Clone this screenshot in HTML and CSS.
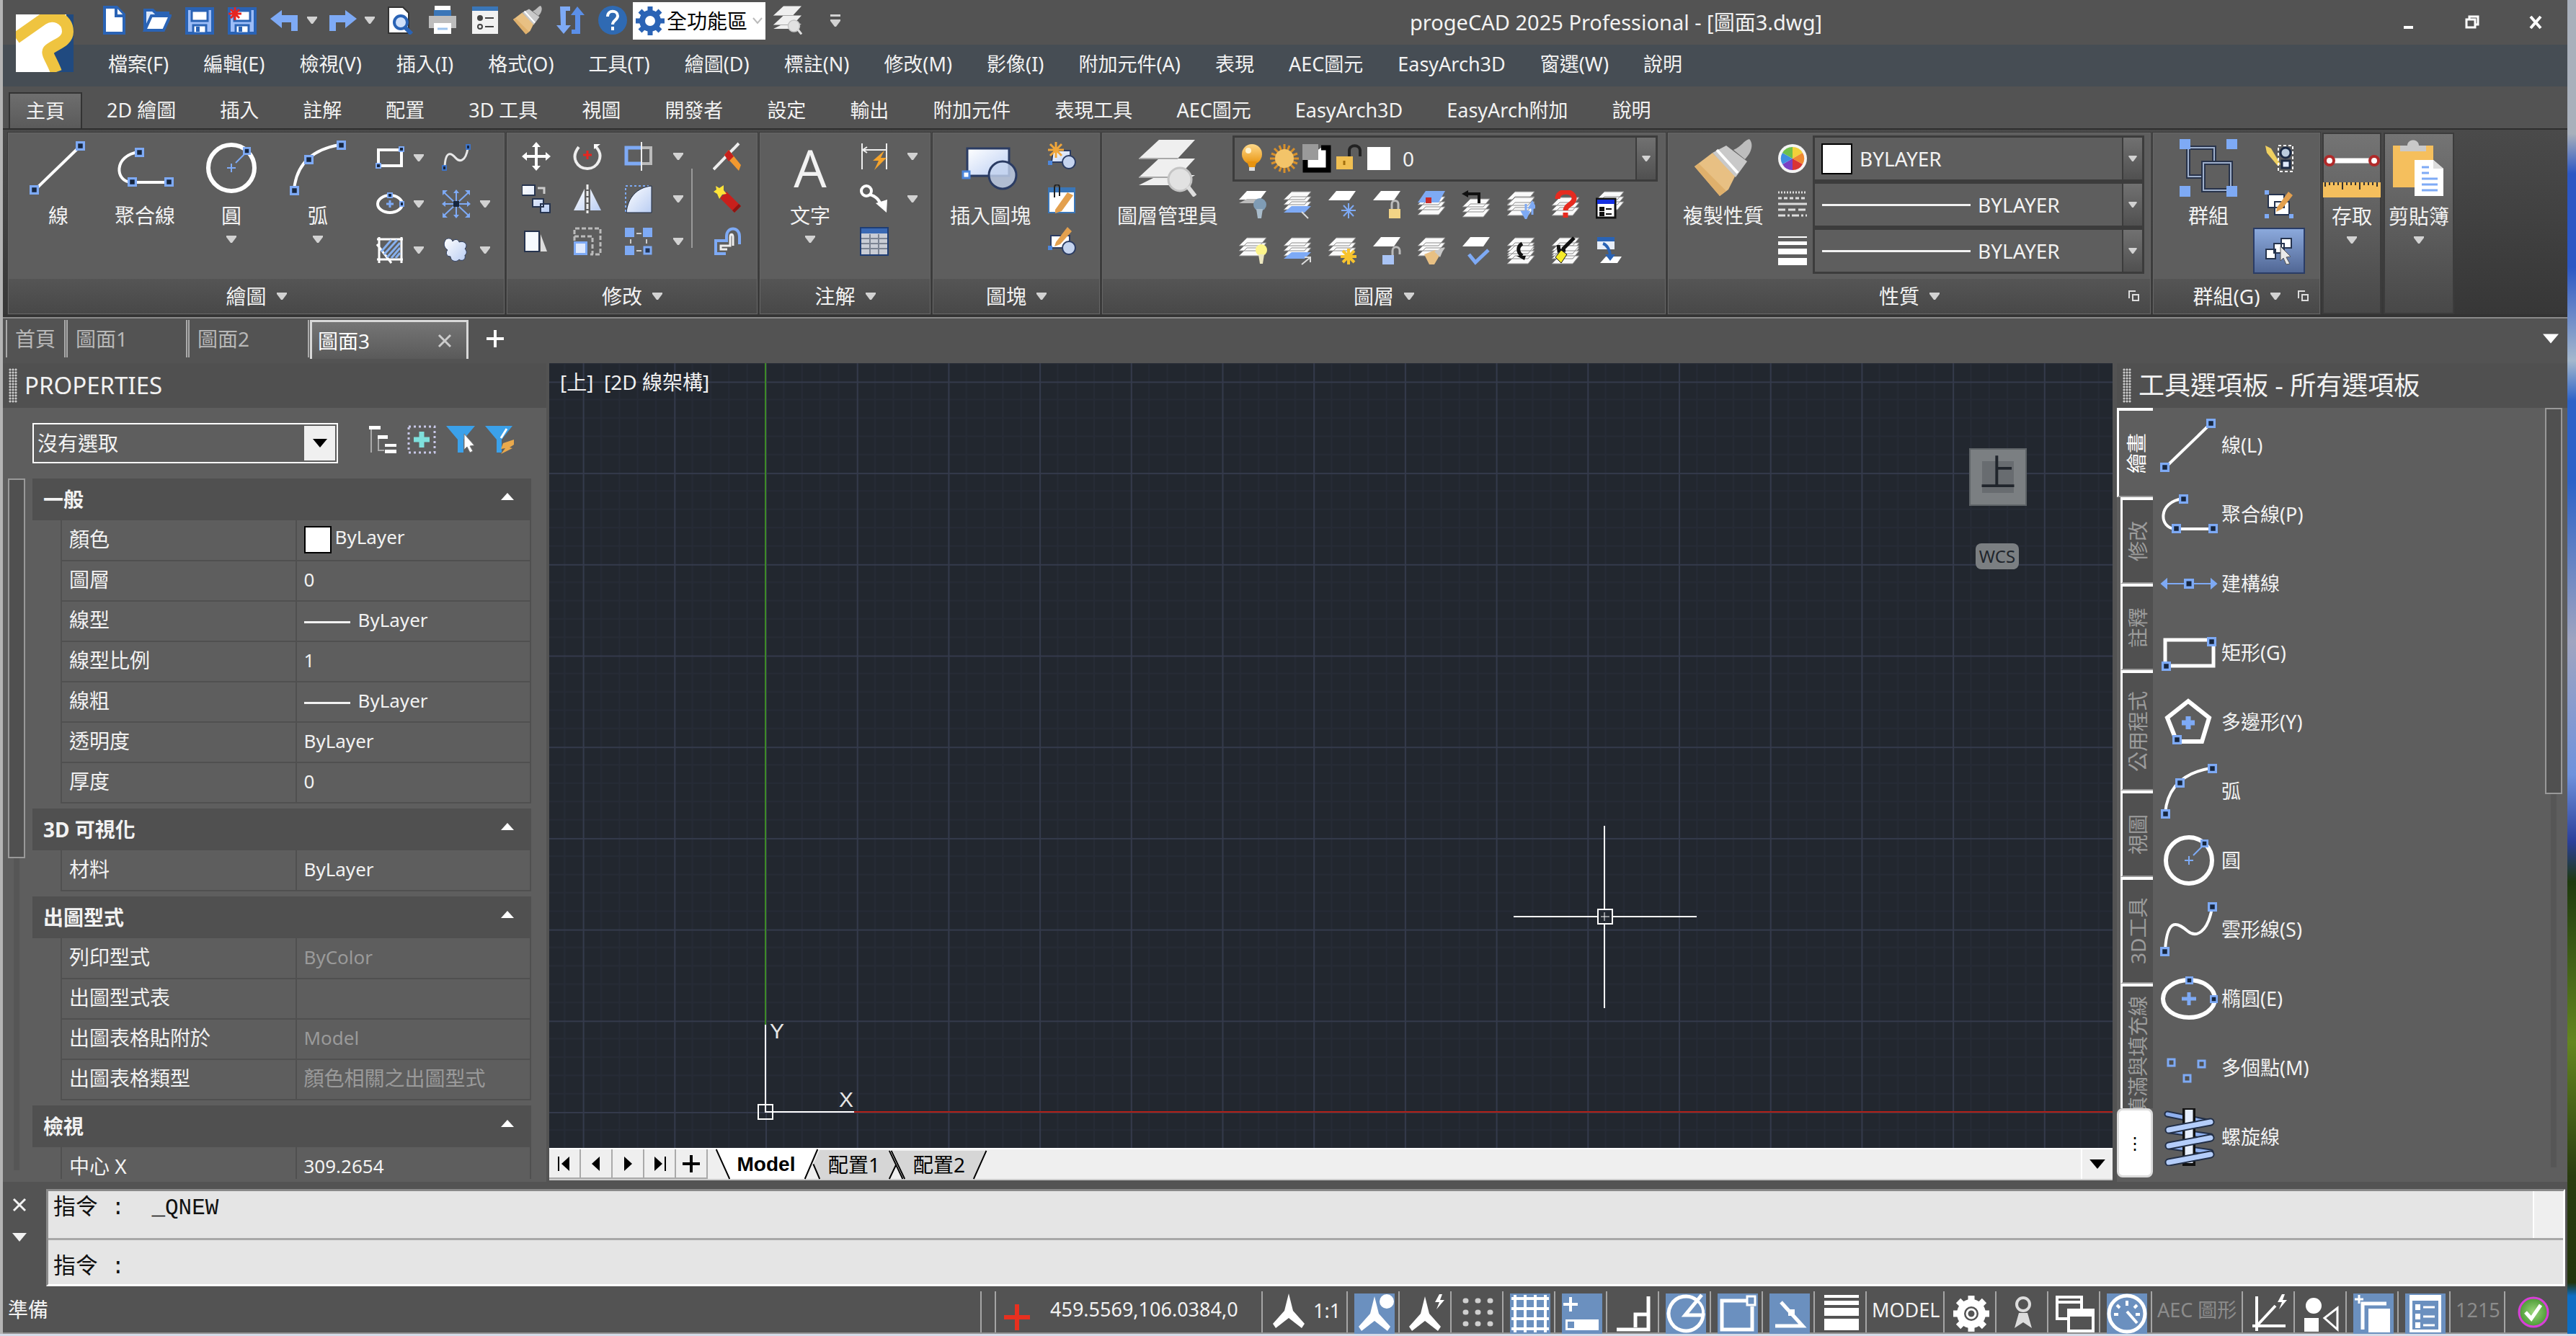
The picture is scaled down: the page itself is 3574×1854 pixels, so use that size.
FILE: index.html
```html
<!DOCTYPE html>
<html lang="zh-Hant">
<head>
    <meta charset="UTF-8">
    <meta name="viewport" content="width=device-width, initial-scale=1.0">
    <title>progeCAD 2025 Professional - [圖面3.dwg]</title>
    <link rel="stylesheet" href="styles.css">
</head>
<body>
    <!-- icon sprite -->
    <svg class="sprite" aria-hidden="true">
        <defs>
            <linearGradient id="g-blue" x1="0" y1="0" x2="1" y2="1"><stop offset="0" stop-color="#fff"/><stop offset="1" stop-color="#b9cdf3"/></linearGradient>
            <linearGradient id="g-bulb" x1="0" y1="0" x2="0" y2="1"><stop offset="0" stop-color="#ffd98a"/><stop offset="1" stop-color="#e8940f"/></linearGradient>
            <radialGradient id="g-ok"><stop offset="0" stop-color="#9bd67c"/><stop offset="1" stop-color="#4b9a35"/></radialGradient>
        </defs>

        <symbol id="caret" viewBox="0 0 14 10"><path d="M0 0h14v2L8 10H6L0 2z" fill="#d2d2d2"/></symbol>
        <symbol id="up" viewBox="0 0 18 10"><path d="M9 0l9 10H0z" fill="#fff"/></symbol>
        <symbol id="down" viewBox="0 0 20 12"><path d="M0 0h20L10 12z" fill="currentColor"/></symbol>
        <symbol id="cross" viewBox="0 0 20 20"><path d="M2 2l16 16M18 2L2 18" stroke="currentColor" stroke-width="3" fill="none"/></symbol>
        <symbol id="plus" viewBox="0 0 24 24"><path d="M12 0v24M0 12h24" stroke="currentColor" stroke-width="4" fill="none"/></symbol>
        <symbol id="node" viewBox="0 0 12 12"><rect x="1.5" y="1.5" width="9" height="9" fill="#16263f" stroke="#7eaaf5" stroke-width="3"/></symbol>
        <symbol id="launch" viewBox="0 0 16 16"><path d="M1 11V1h9M6 6h8v8H6zM8 14h6V8" fill="none" stroke="#ddd" stroke-width="2"/></symbol>

        <!-- quick access -->
        <symbol id="logo" viewBox="0 0 80 80"><path d="M0 0h80v80H0z" fill="#204a80"/><path d="M0 0h70v30L42 52l14 28H0z" fill="#fff"/><path d="M0 33L37 7C50-2 72 4 72 24c0 15-20 18-27 26-3 4 5 14 11 30" fill="none" stroke="#efc440" stroke-width="16"/></symbol>
        <symbol id="new" viewBox="0 0 40 40"><path d="M6 2h17l10 10v26H6z" fill="#fff" stroke="#2a63b5" stroke-width="4"/><path d="M22 2v12h11" fill="#fff" stroke="#2a63b5" stroke-width="4"/></symbol>
        <symbol id="open" viewBox="0 0 40 40"><path d="M3 34V6h11l4 4h17v6" fill="#dce8fb" stroke="#2a63b5" stroke-width="4"/><path d="M3 34l9-20h26l-9 20z" fill="#fff" stroke="#2a63b5" stroke-width="4"/></symbol>
        <symbol id="save" viewBox="0 0 40 40"><path d="M2 4h36v34H2z" fill="#9dbdf7" stroke="#2a63b5" stroke-width="4"/><path d="M9 7h22v14H9zM11 27h18v11H11z" fill="#fff" stroke="#2a63b5" stroke-width="3"/><path d="M15 29h5v7h-5z" fill="#2a63b5"/></symbol>
        <symbol id="saveas" viewBox="0 0 40 40"><use href="#save"/><path d="M10 2v18M1 11h18M4 5l12 12M16 5L4 17" stroke="#e8251f" stroke-width="3"/></symbol>
        <symbol id="undo" viewBox="0 0 40 40"><path d="M0 18L16 6v7h22v22h-9V23H16v8z" fill="#7eaaf5"/></symbol>
        <symbol id="redo" viewBox="0 0 40 40"><path d="M40 18L24 6v7H2v22h9V23h13v8z" fill="#7eaaf5"/></symbol>
        <symbol id="preview" viewBox="0 0 40 40"><path d="M4 2h20l8 8v28H4z" fill="#fff" stroke="#333" stroke-width="2"/><circle cx="21" cy="23" r="9" fill="#cfe0fa" stroke="#2a63b5" stroke-width="4"/><path d="M27 30l9 9" stroke="#2a63b5" stroke-width="6"/></symbol>
        <symbol id="print" viewBox="0 0 40 40"><path d="M9 0h22v14H9z" fill="#fff"/><path d="M8 6h24v9H8z" fill="#3a76b8"/><path d="M1 14h38v17H1z" fill="#bdbdbd"/><path d="M8 24h24v15H8z" fill="#fff"/><path d="M13 32h14" stroke="#9cc4ee" stroke-width="3"/></symbol>
        <symbol id="sheet" viewBox="0 0 40 40"><path d="M2 1h36v38H2z" fill="#f2f2f2"/><path d="M2 1h36v6H2z" fill="#3a76b8"/><circle cx="13" cy="17" r="4" fill="#444"/><circle cx="13" cy="29" r="3" fill="none" stroke="#444" stroke-width="2"/><path d="M20 17h12M20 29h12" stroke="#444" stroke-width="2"/></symbol>
        <symbol id="brush" viewBox="0 0 80 80"><path d="M0 38l25-19 32 31-10 20-12 9z" fill="#e8c083"/><path d="M0 38l6-4 38 38-9 7z" fill="#dfb06c"/><path d="M25 19l19-10 29 22-16 22z" fill="#c9c9c9"/><path d="M31 15l29 32" stroke="#fff" stroke-width="4"/><path d="M54 15C66 10 68 2 76 0c6 6 4 18-6 28z" fill="#bdbdbd"/></symbol>
        <symbol id="swap" viewBox="0 0 40 40"><path d="M6 1h14v6h-6v20h7L11 39 1 27h6z" fill="#7eaaf5"/><path d="M34 39H22v-6h5V13h-6L30 1l10 12h-6z" fill="#5b8fe8"/></symbol>
        <symbol id="help" viewBox="0 0 40 40"><circle cx="20" cy="20" r="20" fill="#2f6ab3"/><path d="M13 15c0-10 14-9 14-1 0 6-7 6-7 12M20 29v5" fill="none" stroke="#fff" stroke-width="4"/></symbol>
        <symbol id="gearblue" viewBox="0 0 40 40"><circle cx="20" cy="20" r="11" fill="none" stroke="#2a63b5" stroke-width="8"/><path d="M20 0v8M20 32v8M0 20h8M32 20h8M6 6l6 6M28 28l6 6M34 6l-6 6M12 28l-6 6" stroke="#2a63b5" stroke-width="7"/></symbol>
        <symbol id="layermgr" viewBox="0 0 80 80"><path d="M28 1h50L54 27H0zM28 27h50L54 53H0zM28 50h50L54 64H0z" fill="#efefef"/><path d="M0 27h54M0 53h54" stroke="#a8a8a8" stroke-width="2"/><circle cx="57" cy="56" r="16" fill="#e2e2e2" stroke="#c4c4c4" stroke-width="3"/><path d="M68 66l10 13" stroke="#ddd" stroke-width="6"/></symbol>

        <!-- draw, large -->
        <symbol id="line" viewBox="0 0 80 80"><path d="M8 70L70 10" stroke="#fff" stroke-width="4"/><use href="#node" x="0" y="64" width="13" height="13"/><use href="#node" x="64" y="3" width="13" height="13"/></symbol>
        <symbol id="pline" viewBox="0 0 80 80"><path d="M32 18C-4 22-2 60 22 60h48" fill="none" stroke="#fff" stroke-width="4"/><use href="#node" x="26" y="12" width="13" height="13"/><use href="#node" x="16" y="53" width="13" height="13"/><use href="#node" x="67" y="53" width="13" height="13"/></symbol>
        <symbol id="circle" viewBox="0 0 80 80"><circle cx="40" cy="40" r="32" fill="none" stroke="#fff" stroke-width="6"/><path d="M40 34v12M34 40h12M46 33l16-16" stroke="#7eaaf5" stroke-width="2"/><use href="#node" x="56" y="11" width="11" height="11"/></symbol>
        <symbol id="arc" viewBox="0 0 80 80"><path d="M7 70Q12 18 70 8" fill="none" stroke="#fff" stroke-width="4"/><use href="#node" x="1" y="65" width="13" height="13"/><use href="#node" x="21" y="22" width="13" height="13"/><use href="#node" x="66" y="2" width="13" height="13"/></symbol>
        <symbol id="xline" viewBox="0 0 80 80"><path d="M4 40h72M9 34l-7 6 7 6zM71 34l7 6-7 6z" fill="#7eaaf5" stroke="#7eaaf5" stroke-width="2"/><use href="#node" x="33" y="33" width="14" height="14"/></symbol>
        <symbol id="rect" viewBox="0 0 80 80"><path d="M7 22h67v36H7z" fill="none" stroke="#fff" stroke-width="5"/><use href="#node" x="2" y="52" width="13" height="13"/><use href="#node" x="65" y="18" width="13" height="13"/></symbol>
        <symbol id="polygon" viewBox="0 0 80 80"><path d="M39 11l29 23-10 33H23L10 34z" fill="none" stroke="#fff" stroke-width="6"/><path d="M39 32v18M30 41h18" stroke="#7eaaf5" stroke-width="7"/><use href="#node" x="17" y="58" width="13" height="13"/></symbol>
        <symbol id="spline" viewBox="0 0 80 80"><path d="M7 68C10 20 26 32 38 42s28 2 34-32" fill="none" stroke="#fff" stroke-width="4"/><use href="#node" x="0" y="64" width="13" height="13"/><use href="#node" x="66" y="2" width="13" height="13"/></symbol>
        <symbol id="ellipse" viewBox="0 0 80 80"><ellipse cx="40" cy="40" rx="36" ry="26" fill="none" stroke="#fff" stroke-width="6"/><path d="M40 31v18M30 40h20" stroke="#7eaaf5" stroke-width="5"/><use href="#node" x="35" y="9" width="11" height="11"/><use href="#node" x="69" y="35" width="11" height="11"/></symbol>
        <symbol id="points" viewBox="0 0 80 80"><path d="M11 28h9v9h-9zM53 30h9v9h-9zM33 50h9v9h-9z" fill="#505050" stroke="#7eaaf5" stroke-width="3"/></symbol>
        <symbol id="helix" viewBox="0 0 80 80"><path d="M10 8l60 12M14 31l56 8M14 53l56 8" stroke="#222f47" stroke-width="9" stroke-linecap="round"/><path d="M10 8l60 12M14 31l56 8M14 53l56 8" stroke="#8fb0ee" stroke-width="5" stroke-linecap="round"/><path d="M40 0v80" stroke="#111" stroke-width="18"/><path d="M40 2v74" stroke="#e6eefd" stroke-width="11"/><path d="M12 30l58-11M12 52l58-11M12 75l58-11" stroke="#222f47" stroke-width="11" stroke-linecap="round"/><path d="M12 30l58-11M12 52l58-11M12 75l58-11" stroke="#b4cdfa" stroke-width="7" stroke-linecap="round"/></symbol>

        <!-- draw, small -->
        <symbol id="s-rect" viewBox="0 0 40 40"><path d="M4 9h32v22H4z" fill="none" stroke="#fff" stroke-width="4"/><path d="M1 28h6v6H1zM33 5h6v6h-6z" fill="#16263f" stroke="#7eaaf5" stroke-width="2"/></symbol>
        <symbol id="s-spline" viewBox="0 0 40 40"><path d="M4 33C5 8 14 14 19 20s14 6 17-13" fill="none" stroke="#e8e8e8" stroke-width="3"/><path d="M1 31h5v6H1zM34 2h5v6h-5z" fill="#16263f" stroke="#3e74c8" stroke-width="2"/></symbol>
        <symbol id="s-ellipse" viewBox="0 0 40 40"><ellipse cx="20" cy="20" rx="17" ry="12" fill="none" stroke="#fff" stroke-width="4"/><path d="M20 15v10M15 20h10" stroke="#7eaaf5" stroke-width="3"/><path d="M17 5h6v6h-6zM34 17h5v6h-5z" fill="#16263f" stroke="#7eaaf5" stroke-width="2"/></symbol>
        <symbol id="s-rays" viewBox="0 0 40 40"><path d="M20 1v38M1 20h38M3 4l34 32M37 4L3 36" stroke="#7eaaf5" stroke-width="2"/><path d="M16 5l4-5 4 5zM16 35l4 5 4-5zM5 16l-5 4 5 4zM35 16l5 4-5 4zM1 1h7L1 8zM39 1h-7l7 7zM1 39h7l-7-7zM39 39h-7l7-7z" fill="#7eaaf5"/><path d="M16 16h8v8h-8z" fill="#16263f"/></symbol>
        <symbol id="s-hatch" viewBox="0 0 40 40"><path d="M5 2v36M36 2v36M2 5h36M2 33h36M2 12l20 26" stroke="#fff" stroke-width="3"/><path d="M8 22L22 6M12 26L30 6M16 30L34 10M22 31l12-14M28 31l6-7" stroke="#86b0ee" stroke-width="3"/></symbol>
        <symbol id="s-cloud" viewBox="0 0 40 40"><path d="M4 8c2-6 10-5 11 0 3-4 8-3 9 1 8-3 13 5 8 9 4 5 2 8 0 9 2 7-5 9-8 6-4 5-12 2-12-4-6 0-7-6-4-9-4-3-6-7-4-12z" fill="url(#g-blue)" stroke="#2c3c60" stroke-width="1"/></symbol>

        <!-- modify -->
        <symbol id="move" viewBox="0 0 40 40"><path d="M20 2v36M2 20h36" stroke="#fff" stroke-width="4"/><path d="M14 7l6-7 6 7zM14 33l6 7 6-7zM7 14l-7 6 7 6zM33 14l7 6-7 6z" fill="#fff"/></symbol>
        <symbol id="rotate" viewBox="0 0 40 40"><path d="M8 7C-4 22 6 37 20 37S44 20 32 7" fill="none" stroke="#eee" stroke-width="4"/><path d="M29 10V3h9z" fill="#fff"/><path d="M20 12v12M14 18h12" stroke="#e8251f" stroke-width="3"/></symbol>
        <symbol id="stretch" viewBox="0 0 40 40"><path d="M23 8H3v22h20" fill="none" stroke="#7eaaf5" stroke-width="5"/><path d="M25 8h12v22H25" fill="none" stroke="#bbb" stroke-width="4"/><path d="M24 0v40" stroke="#eee" stroke-width="2"/></symbol>
        <symbol id="copy" viewBox="0 0 40 40"><path d="M0 1h18v14H0zM15 20h15v11H15zM26 27h13v12H26z" fill="url(#g-blue)" stroke="#26344f" stroke-width="2"/><path d="M22 5h9v8" fill="none" stroke="#ccc" stroke-width="3"/></symbol>
        <symbol id="mirror" viewBox="0 0 40 40"><path d="M16 6v30H1zM24 6v30h15z" fill="url(#g-blue)"/><path d="M20 0v40" stroke="#eee" stroke-width="3" stroke-dasharray="7 2"/></symbol>
        <symbol id="fillet" viewBox="0 0 40 40"><path d="M2 38V2h32" fill="none" stroke="#7eaaf5" stroke-width="2" stroke-dasharray="3 3"/><path d="M3 39C5 18 18 4 38 2v37z" fill="url(#g-blue)" stroke="#1c2a44" stroke-width="1"/></symbol>
        <symbol id="trapezoid" viewBox="0 0 40 40"><path d="M4 6h20v28H4z" fill="#f7fbff" stroke="#26344f" stroke-width="2"/><path d="M26 10l9 24h-9z" fill="#ddd"/></symbol>
        <symbol id="scale" viewBox="0 0 40 40"><path d="M2 19V2h36v36H24M2 13h25v25" fill="none" stroke="#bbb" stroke-width="3" stroke-dasharray="6 3"/><path d="M1 20h19v19H1z" fill="#7eaaf5"/><path d="M4 23h13v13H4z" fill="#dfe9fd"/></symbol>
        <symbol id="array" viewBox="0 0 40 40"><path d="M1 1h13v13H1zM26 1h13v13H26zM1 26h13v13H1z" fill="#7eaaf5"/><path d="M28 28h9v9h-9z" fill="#223556" stroke="#7eaaf5" stroke-width="3"/><path d="M17 9h7M17 33h7M9 17v6M31 17v6" stroke="#ccc" stroke-width="2"/></symbol>
        <symbol id="erase" viewBox="0 0 40 40"><path d="M1 38L36 2" stroke="#eee" stroke-width="4"/><path d="M16 18l6-7 17 21-3 8z" fill="#f0982f"/><path d="M16 18l6-7 7 9-7 7z" fill="#c8201c"/></symbol>
        <symbol id="explode" viewBox="0 0 40 40"><path d="M10 19l9-9 20 20-9 9z" fill="#c8201c"/><path d="M27 36l9-9 3 3-9 9z" fill="#8d1512"/><path d="M4 2l5 3 6-4v7l4 5-6 1-4 6-3-7-5-3 4-3z" fill="#ffe438"/></symbol>
        <symbol id="offset" viewBox="0 0 40 40"><path d="M37 24V13c0-14-18-14-18 0v6H4v18h14" fill="none" stroke="#7eaaf5" stroke-width="4"/><path d="M28 26V14c0-5-4-5-4 0v12H11v5h9" fill="none" stroke="#eee" stroke-width="3"/></symbol>

        <!-- annotate, block -->
        <symbol id="dim" viewBox="0 0 40 40"><path d="M3 2v36M37 2v36M4 11h32M10 7l-6 4 6 4" fill="none" stroke="#eee" stroke-width="2"/><path d="M34 12L18 26h8l-6 13 17-17h-8z" fill="#f5a42c"/></symbol>
        <symbol id="leader" viewBox="0 0 40 40"><circle cx="9" cy="9" r="7" fill="none" stroke="#fff" stroke-width="4"/><path d="M13 14c10 2 14 8 17 16" fill="none" stroke="#fff" stroke-width="4"/><path d="M22 26l16-5-1 18z" fill="#fff"/></symbol>
        <symbol id="table" viewBox="0 0 40 40"><path d="M1 1h38v38H1z" fill="#c9cdd6" stroke="#1f3d73" stroke-width="2"/><path d="M2 2h36v7H2z" fill="#3a69b4"/><path d="M2 16h36M2 23h36M2 30h36M14 10v28M26 10v28" stroke="#7c8493" stroke-width="2"/></symbol>
        <symbol id="block" viewBox="0 0 80 80"><path d="M8 13h58v38H8z" fill="url(#g-blue)" stroke="#2b3c63" stroke-width="3"/><circle cx="57" cy="50" r="19" fill="#c5d4ef" fill-opacity=".8" stroke="#2b3c63" stroke-width="3"/><path d="M2 45h9v9H2z" fill="#fff" stroke="#4c86dc" stroke-width="3"/></symbol>
        <symbol id="b-new" viewBox="0 0 40 40"><path d="M8 12h24v16H6z" fill="url(#g-blue)" stroke="#2b3c63" stroke-width="2"/><circle cx="30" cy="28" r="9" fill="#c5d4ef" stroke="#2b3c63" stroke-width="2"/><path d="M12 0v22M1 11h22M4 3l16 16M20 3L4 19" stroke="#f0a63a" stroke-width="3"/><path d="M1 26h6v6H1z" fill="#4c86dc"/></symbol>
        <symbol id="b-attr" viewBox="0 0 40 40"><path d="M2 5h36v34H2z" fill="#fff" stroke="#3a76b8" stroke-width="2"/><path d="M2 4h36v7H2z" fill="#3a76b8"/><path d="M11 35l17-24 8 4-16 22-9 3z" fill="#e3a04e"/><path d="M10 18V4c0-5 7-5 7 0v12" fill="none" stroke="#222" stroke-width="2"/></symbol>
        <symbol id="b-edit" viewBox="0 0 40 40"><path d="M5 12h26v17H5z" fill="#fff" stroke="#2b3c63" stroke-width="2"/><circle cx="30" cy="29" r="9" fill="#c5d4ef" stroke="#2b3c63" stroke-width="2"/><path d="M12 21L28 0l6 6-16 18-8 3z" fill="#e3a04e"/><path d="M1 26h6v6H1z" fill="#4c86dc"/></symbol>

        <!-- layers -->
        <symbol id="ly" viewBox="0 0 40 40"><path d="M12 2h27l-9 11H1zM12 9h27l-9 11H1zM12 16h27l-9 11H1z" fill="#fafafa" stroke="#8d8d8d" stroke-width="1"/></symbol>
        <symbol id="l-off" viewBox="0 0 40 40"><path d="M12 1h27l-9 12H1z" fill="#fff"/><path d="M12 12h14l-4 6H1z" fill="#bbb"/><circle cx="30" cy="20" r="9" fill="#7f9cb5"/><path d="M25 26h9l-2 13h-5z" fill="#a9bccb"/></symbol>
        <symbol id="l-walk" viewBox="0 0 40 40"><use href="#ly"/><path d="M12 22h27l-9 9H1z" fill="#7eaaf5"/><path d="M26 30l9 9" stroke="#ddd" stroke-width="2"/></symbol>
        <symbol id="l-unwalk" viewBox="0 0 40 40"><use href="#ly"/><path d="M12 22h27l-9 9H1z" fill="#7eaaf5"/><path d="M26 39l11-9M30 29h8v7" fill="none" stroke="#ddd" stroke-width="2"/></symbol>
        <symbol id="l-freeze" viewBox="0 0 40 40"><path d="M12 1h27l-9 13H1z" fill="#fff"/><path d="M29 18v21M19 28h20M22 21l14 15M36 21L22 36" stroke="#7eaaf5" stroke-width="2"/></symbol>
        <symbol id="l-lock" viewBox="0 0 40 40"><path d="M12 1h27l-9 13H1z" fill="#fff"/><path d="M27 28v-9c0-6 9-6 9 0v9" fill="none" stroke="#bbb" stroke-width="3"/><path d="M23 26h16v13H23z" fill="#f2d486"/></symbol>
        <symbol id="l-cur" viewBox="0 0 40 40"><use href="#ly" y="7"/><path d="M12 1h27l-9 16H1z" fill="#7eaaf5"/><path d="M12 10h8v8h-8z" fill="#c92a2a"/></symbol>
        <symbol id="l-prev" viewBox="0 0 40 40"><use href="#ly" y="10"/><path d="M24 18V5H6" fill="none" stroke="#111" stroke-width="4"/><path d="M0 5l9-5v10z" fill="#111"/></symbol>
        <symbol id="l-merge" viewBox="0 0 40 40"><use href="#ly"/><use href="#ly" y="8"/><path d="M27 19v15M36 19v15M22 30l5 9 4-9zM32 24l4-7 4 7z" stroke="#7eaaf5" stroke-width="3" fill="#7eaaf5"/></symbol>
        <symbol id="l-ask" viewBox="0 0 40 40"><use href="#ly" y="8"/><path d="M9 12C9-2 33 0 32 12c-1 8-12 8-12 16M20 31v7" fill="none" stroke="#e62b20" stroke-width="7"/></symbol>
        <symbol id="l-state" viewBox="0 0 40 40"><use href="#ly"/><path d="M1 12h26v26H1z" fill="#fff" stroke="#111" stroke-width="3"/><path d="M2 13h24v6H2z" fill="#1530e0"/><path d="M6 24h5v4H6zM6 31h5v4H6zM14 26h8M14 33h8" fill="#111" stroke="#111" stroke-width="2"/></symbol>
        <symbol id="l-on" viewBox="0 0 40 40"><use href="#ly"/><circle cx="32" cy="19" r="8" fill="#fdf58a"/><path d="M28 25h8l-2 13h-4z" fill="#ece7c0"/></symbol>
        <symbol id="l-thaw" viewBox="0 0 40 40"><use href="#ly"/><path d="M29 17v22M18 28h22M21 20l16 16M37 20L21 36" stroke="#f7c32e" stroke-width="4"/></symbol>
        <symbol id="l-unlock" viewBox="0 0 40 40"><path d="M12 1h27l-9 13H1z" fill="#fff"/><path d="M28 28v-8c0-7 10-7 10 0v5" fill="none" stroke="#bbb" stroke-width="3"/><path d="M14 26h16v13H14z" fill="#a9c4f5"/></symbol>
        <symbol id="l-match" viewBox="0 0 40 40"><use href="#ly"/><path d="M10 25l15-6 6 8-7 12h-7z" fill="#e8c083"/><path d="M24 21l14-6-6 14z" fill="#c9c9c9"/></symbol>
        <symbol id="l-check" viewBox="0 0 40 40"><path d="M12 1h27l-9 13H1z" fill="#fff"/><path d="M10 25l9 11 18-17" fill="none" stroke="#7eaaf5" stroke-width="5"/></symbol>
        <symbol id="l-curved" viewBox="0 0 40 40"><use href="#ly"/><use href="#ly" y="11"/><path d="M22 10c-7 4-7 12 0 17" fill="none" stroke="#111" stroke-width="5"/><path d="M14 27h13l-2 6z" fill="#111"/></symbol>
        <symbol id="l-swap" viewBox="0 0 40 40"><use href="#ly"/><use href="#ly" y="11"/><path d="M32 2L16 18M10 12l1 8 9-1" fill="none" stroke="#111" stroke-width="5"/><path d="M14 19l8 6-8 12-8-8z" fill="#f5ea28" stroke="#111"/></symbol>
        <symbol id="l-export" viewBox="0 0 40 40"><path d="M2 1h24v17H2z" fill="#e8eef8"/><path d="M2 1h24v6H2z" fill="#2a63b5"/><path d="M14 28h22l-6 9H6z" fill="#fff"/><path d="M10 10c6 2 10 10 10 17" fill="none" stroke="#2a63b5" stroke-width="4"/><path d="M13 25h14l-7 9z" fill="#2a63b5"/></symbol>
        <symbol id="bulb" viewBox="0 0 40 40"><circle cx="20" cy="14" r="14" fill="url(#g-bulb)"/><path d="M13 24h14l-3 8h-8z" fill="#e8940f"/><path d="M16 32h8v5h-8z" fill="#ddd"/><circle cx="15" cy="9" r="4" fill="#fff3d0"/></symbol>
        <symbol id="sun" viewBox="0 0 40 40"><path d="M20 0v40M0 20h40M6 6l28 28M34 6L6 34M13 2l14 36M27 2L13 38M2 13l36 14M38 13L2 27" stroke="#d8902a" stroke-width="3"/><circle cx="20" cy="20" r="13" fill="#f3c469"/></symbol>
        <symbol id="vp" viewBox="0 0 40 40"><path d="M4 20v16h32V5H26" fill="#fff" stroke="#000" stroke-width="7"/><path d="M0 0h22v22H0z" fill="#9a9a9a"/></symbol>
        <symbol id="padlock" viewBox="0 0 40 40"><path d="M20 18V9c0-9 15-9 15 0v8" fill="none" stroke="#222" stroke-width="4"/><path d="M2 17h23v18H2z" fill="#f0bf52"/><path d="M13 23v6" stroke="#a36f0d" stroke-width="3"/></symbol>

        <!-- properties, group -->
        <symbol id="wheel" viewBox="0 0 40 40"><circle cx="20" cy="20" r="20" fill="#f4f4f4"/><path d="M20 20V4a16 16 0 0 1 14 8z" fill="#f2d03a"/><path d="M20 20l14-8a16 16 0 0 1 0 16z" fill="#ef8a31"/><path d="M20 20l14 8a16 16 0 0 1-14 8z" fill="#d93434"/><path d="M20 20v16a16 16 0 0 1-14-8z" fill="#7a3fc4"/><path d="M20 20L6 28a16 16 0 0 1 0-16z" fill="#3f8fe0"/><path d="M20 20L6 12a16 16 0 0 1 14-8z" fill="#6fc04a"/></symbol>
        <symbol id="ltype" viewBox="0 0 40 40"><path d="M0 3h40" stroke="#ddd" stroke-width="3" stroke-dasharray="2 2"/><path d="M0 11h40" stroke="#ddd" stroke-width="3" stroke-dasharray="5 3"/><path d="M0 19h40" stroke="#ddd" stroke-width="3"/><path d="M0 27h40" stroke="#ddd" stroke-width="3" stroke-dasharray="10 4"/><path d="M0 35h40" stroke="#ddd" stroke-width="3" stroke-dasharray="10 3 3 3"/></symbol>
        <symbol id="lweight" viewBox="0 0 40 40"><path d="M0 0h40v2H0zM0 7h40v5H0zM0 17h40v8H0zM0 30h40v10H0z" fill="#fff"/></symbol>
        <symbol id="group" viewBox="0 0 80 80"><path d="M12 12h36v40H12z" fill="none" stroke="#28334a" stroke-width="6"/><path d="M12 12h36v40H12z" fill="none" stroke="#9fb0cc" stroke-width="2"/><path d="M33 33h38v38H33z" fill="#5f5f5f" stroke="#28334a" stroke-width="6"/><path d="M33 33h38v38H33z" fill="none" stroke="#9fb0cc" stroke-width="2"/><path d="M0 0h15v14H0zM65 0h15v14H65zM0 65h15v15H0zM65 65h15v15H65z" fill="#7eaaf5"/></symbol>
        <symbol id="ungroup" viewBox="0 0 40 40"><path d="M1 2l8 4 13 22-4 2L3 12z" fill="#f0d060"/><path d="M19 2h20v36H19z" fill="none" stroke="#fff" stroke-width="2" stroke-dasharray="4 3"/><circle cx="29" cy="12" r="7" fill="#bcd" stroke="#1c2a44" stroke-width="3"/><path d="M24 23h11v10H24z" fill="#dfe9fd" stroke="#1c2a44" stroke-width="3"/></symbol>
        <symbol id="groupedit" viewBox="0 0 40 40"><path d="M5 6h22v18H5zM14 16h20v18H14z" fill="#fff" stroke="#26344f" stroke-width="2"/><path d="M17 24L33 2l6 5-15 19-8 4z" fill="#e3a04e"/><path d="M0 0h6v6H0zM0 33h6v6H0zM34 33h6v6h-6z" fill="#7eaaf5"/></symbol>
        <symbol id="groupsel" viewBox="0 0 40 40"><path d="M23 3h14v13H23zM13 10h14v13H13zM2 18h13v13H2z" fill="#fff" stroke="#26344f" stroke-width="2"/><path d="M22 14l14 14-6 1 5 9-5 1-4-9-4 4z" fill="#e9e9e9" stroke="#555"/></symbol>
        <symbol id="measure" viewBox="0 0 80 80"><path d="M14 29h52" stroke="#fff" stroke-width="7"/><circle cx="9" cy="29" r="6" fill="#fff" stroke="#b02a2a" stroke-width="4"/><circle cx="71" cy="29" r="6" fill="#fff" stroke="#b02a2a" stroke-width="4"/><path d="M0 59h80v21H0z" fill="#f5bf5d"/><path d="M3 59v6M9 59v4M15 59v4M21 59v4M27 59v10M33 59v4M39 59v4M45 59v4M51 59v10M57 59v4M63 59v4M69 59v4M75 59v6" stroke="#333" stroke-width="2"/></symbol>
        <symbol id="clip" viewBox="0 0 80 80"><path d="M4 8h56v58H4z" fill="#f5bf5d"/><path d="M14 8h10c0-10 16-10 16 0h10v8H14z" fill="#c9c9c9"/><path d="M34 28h26l14 12v38H34z" fill="#fff"/><path d="M60 28v12h14z" fill="#ddd"/><path d="M44 38h10M44 46h10M44 54h22M44 62h22M44 70h22" stroke="#7eaaf5" stroke-width="3"/></symbol>

        <!-- properties palette -->
        <symbol id="p-tree" viewBox="0 0 40 40"><path d="M4 5v33M14 17v18h8" fill="none" stroke="#aaa" stroke-width="2"/><path d="M1 1h16v5H1zM13 14h14v5H13zM23 26h16v4H23zM23 34h16v5H23z" fill="#fff"/></symbol>
        <symbol id="p-add" viewBox="0 0 40 40"><path d="M2 2h36v36H2z" fill="none" stroke="#c8c8e8" stroke-width="3" stroke-dasharray="3 4"/><path d="M20 9v22M9 20h22" stroke="#7fe0dc" stroke-width="7"/></symbol>
        <symbol id="p-pick" viewBox="0 0 40 40"><path d="M0 1h40L24 20v18h-8V20z" fill="#3ba1ea"/><path d="M25 12l14 16-6 1 4 7-4 2-4-8-4 4z" fill="#fff" stroke="#777"/></symbol>
        <symbol id="p-quick" viewBox="0 0 40 40"><path d="M0 1h38L23 20v18h-7V20z" fill="#3ba1ea"/><path d="M30 5l-8 13" stroke="#fff" stroke-width="3"/><path d="M40 20l-15 5-3 8 6-1-6 8 16-8-4-1 6-4z" fill="#e9a94c"/></symbol>

        <!-- status bar, 56px tiles -->
        <symbol id="t-scale" viewBox="0 0 56 56"><path d="M28 4l6 24 16 18-4 6-18-14-18 14-4-6 16-18z" fill="#fff"/></symbol>
        <symbol id="t-vis" viewBox="0 0 56 56"><use href="#t-scale"/><circle cx="45" cy="11" r="10" fill="#fff"/></symbol>
        <symbol id="t-auto" viewBox="0 0 56 56"><use href="#t-scale" x="-2"/><path d="M46 1l-6 11h6l-4 10 11-13h-6l3-8z" fill="#fff"/></symbol>
        <symbol id="t-snap" viewBox="0 0 56 56"><path d="M10 10h36M10 26h36M10 42h36" stroke="#cfcfcf" stroke-width="7" stroke-dasharray="1 16" stroke-linecap="round"/></symbol>
        <symbol id="t-grid" viewBox="0 0 56 56"><path d="M7 2v52M21 2v52M35 2v52M49 2v52M2 7h52M2 21h52M2 35h52M2 49h52" stroke="#fff" stroke-width="4"/></symbol>
        <symbol id="t-dyn" viewBox="0 0 56 56"><path d="M12 5v20M2 15h20" stroke="#fff" stroke-width="4"/><path d="M5 36h46v15H5z" fill="#fff"/><path d="M8 39h9v9H8z" fill="#6b90bf"/></symbol>
        <symbol id="t-ortho" viewBox="0 0 56 56"><path d="M48 4v46H4M46 29H30v18" fill="none" stroke="#fff" stroke-width="5"/></symbol>
        <symbol id="t-polar" viewBox="0 0 56 56"><path d="M44 10A24 24 0 1 0 52 30H27L50 2" fill="none" stroke="#fff" stroke-width="5"/><path d="M44 10c6 5 9 12 8 20" fill="none" stroke="#fff" stroke-width="4"/></symbol>
        <symbol id="t-osnap" viewBox="0 0 56 56"><path d="M40 10H6v40h42V18" fill="none" stroke="#fff" stroke-width="5"/><path d="M41 4h11v12H41z" fill="none" stroke="#fff" stroke-width="3"/></symbol>
        <symbol id="t-otrack" viewBox="0 0 56 56"><path d="M16 12l30 33H8" fill="none" stroke="#fff" stroke-width="5"/><path d="M26 22h9v9h-9z" fill="#fff"/></symbol>
        <symbol id="t-lw" viewBox="0 0 56 56"><path d="M4 2h48v4H4zM4 10h48v6H4zM4 20h48v11H4zM4 35h48v16H4z" fill="#fff"/></symbol>
        <symbol id="t-gear" viewBox="0 0 56 56"><circle cx="28" cy="28" r="15" fill="none" stroke="#fff" stroke-width="10"/><path d="M28 3v8M28 45v8M3 28h8M45 28h8M10 10l7 7M39 39l7 7M46 10l-7 7M17 39l-7 7" stroke="#fff" stroke-width="9"/><circle cx="28" cy="28" r="6" fill="none" stroke="#fff" stroke-width="3"/></symbol>
        <symbol id="t-medal" viewBox="0 0 56 56"><circle cx="28" cy="15" r="9" fill="none" stroke="#ddd" stroke-width="4"/><path d="M22 27h12l6 21-12-8-12 8z" fill="#ddd"/></symbol>
        <symbol id="t-win" viewBox="0 0 56 56"><path d="M3 5h34v30H3zM3 12h34" fill="none" stroke="#fff" stroke-width="4"/><path d="M19 23h34v29H19z" fill="#535353" stroke="#fff" stroke-width="4"/><path d="M19 23h34v9H19z" fill="#fff"/></symbol>
        <symbol id="t-clock" viewBox="0 0 56 56"><circle cx="28" cy="28" r="25" fill="none" stroke="#fff" stroke-width="5"/><path d="M28 25l14 16" stroke="#fff" stroke-width="4"/><path d="M28 10v7M14 16l4 4M42 16l-4 4M10 29h6M46 29h-6" stroke="#fff" stroke-width="4"/></symbol>
        <symbol id="t-ucs" viewBox="0 0 56 56"><path d="M10 4v48M4 45h46M10 45L36 17" stroke="#fff" stroke-width="4"/><path d="M45 1l-6 11h6l-4 10 11-13h-6l3-8z" fill="#fff"/></symbol>
        <symbol id="t-shapes" viewBox="0 0 56 56"><circle cx="17" cy="17" r="11" fill="#fff"/><path d="M4 34h20v19H4z" fill="#fff"/><path d="M50 20v30L32 34z" fill="none" stroke="#fff" stroke-width="3"/></symbol>
        <symbol id="t-cycle" viewBox="0 0 56 56"><path d="M8 2v12M2 8h12" stroke="#fff" stroke-width="3"/><path d="M46 14H13v36" fill="none" stroke="#fff" stroke-width="5"/><path d="M21 21h30v33H21z" fill="#fff"/></symbol>
        <symbol id="t-props" viewBox="0 0 56 56"><path d="M8 4h40v48H8z" fill="none" stroke="#fff" stroke-width="4"/><path d="M8 3h40v7H8zM14 15h7v8h-7zM14 28h7v8h-7zM14 40h7v8h-7z" fill="#fff"/><path d="M25 19h16M25 32h16M25 44h16" stroke="#fff" stroke-width="3"/></symbol>
        <symbol id="t-ok" viewBox="0 0 46 46"><circle cx="23" cy="23" r="20" fill="url(#g-ok)" stroke="#d83fd8" stroke-width="3"/><path d="M12 23l8 9 13-19" fill="none" stroke="#fff" stroke-width="5"/></symbol>
    </svg>

    <div class="app">
        <header class="head">
            <button class="logo" aria-label="progeCAD"><svg><use href="#logo"/></svg></button>
            <div class="head-rows">
                <div class="titlebar">
                    <div class="quick">
                        <button aria-label="新建"><svg><use href="#new"/></svg></button>
                        <button aria-label="開啟"><svg><use href="#open"/></svg></button>
                        <button aria-label="儲存"><svg><use href="#save"/></svg></button>
                        <button aria-label="另存"><svg><use href="#saveas"/></svg></button>
                        <button aria-label="復原"><svg><use href="#undo"/></svg></button>
                        <button class="tiny" aria-label="復原清單"><svg class="caret"><use href="#caret"/></svg></button>
                        <button aria-label="重做"><svg><use href="#redo"/></svg></button>
                        <button class="tiny" aria-label="重做清單"><svg class="caret"><use href="#caret"/></svg></button>
                        <button aria-label="預覽"><svg><use href="#preview"/></svg></button>
                        <button aria-label="列印"><svg><use href="#print"/></svg></button>
                        <button aria-label="性質"><svg><use href="#sheet"/></svg></button>
                        <button aria-label="複製性質"><svg><use href="#brush"/></svg></button>
                        <button aria-label="切換"><svg><use href="#swap"/></svg></button>
                        <button aria-label="說明"><svg><use href="#help"/></svg></button>
                        <div class="workspace">
                            <svg><use href="#gearblue"/></svg>
                            <select aria-label="工作區"><option>全功能區</option></select>
                            <svg class="chevron" viewBox="0 0 14 10"><path d="M1 1l6 7 6-7" fill="none" stroke="#bbb" stroke-width="2"/></svg>
                        </div>
                        <button aria-label="圖層管理員"><svg><use href="#layermgr"/></svg></button>
                        <button class="more" aria-label="自訂"><svg class="caret"><use href="#caret"/></svg></button>
                    </div>
                    <h1 class="title">progeCAD 2025 Professional - [圖面3.dwg]</h1>
                    <div class="window-buttons">
                        <button aria-label="最小化"><svg viewBox="0 0 20 20"><path d="M3 15h13v4H3z" fill="#fff"/></svg></button>
                        <button aria-label="還原"><svg viewBox="0 0 20 20"><path d="M6 5V2h12v11h-3M2 6h12v11H2z" fill="none" stroke="#fff" stroke-width="3"/></svg></button>
                        <button aria-label="關閉"><svg viewBox="0 0 20 20"><path d="M3 2l14 16M17 2L3 18" stroke="#fff" stroke-width="4"/></svg></button>
                    </div>
                </div>
                <nav class="menubar">
                    <a href="#">檔案(F)</a><a href="#">編輯(E)</a><a href="#">檢視(V)</a><a href="#">插入(I)</a><a href="#">格式(O)</a><a href="#">工具(T)</a><a href="#">繪圖(D)</a><a href="#">標註(N)</a><a href="#">修改(M)</a><a href="#">影像(I)</a><a href="#">附加元件(A)</a><a href="#">表現</a><a href="#">AEC圖元</a><a href="#">EasyArch3D</a><a href="#">窗選(W)</a><a href="#">說明</a>
                </nav>
            </div>
        </header>

        <nav class="ribbon-tabs">
            <button class="active">主頁</button><button>2D 繪圖</button><button>插入</button><button>註解</button><button>配置</button><button>3D 工具</button><button>視圖</button><button>開發者</button><button>設定</button><button>輸出</button><button>附加元件</button><button>表現工具</button><button>AEC圖元</button><button>EasyArch3D</button><button>EasyArch附加</button><button>說明</button>
        </nav>

        <div class="ribbon">
            <section class="panel panel-draw">
                <div class="panel-body">
                    <button class="big"><svg><use href="#line"/></svg>線</button>
                    <button class="big"><svg><use href="#pline"/></svg>聚合線</button>
                    <button class="big"><svg><use href="#circle"/></svg>圓<svg class="caret"><use href="#caret"/></svg></button>
                    <button class="big"><svg><use href="#arc"/></svg>弧<svg class="caret"><use href="#caret"/></svg></button>
                    <div class="tools">
                        <button aria-label="矩形"><svg><use href="#s-rect"/></svg><svg class="caret"><use href="#caret"/></svg></button>
                        <button aria-label="雲形線"><svg><use href="#s-spline"/></svg></button>
                        <button aria-label="橢圓"><svg><use href="#s-ellipse"/></svg><svg class="caret"><use href="#caret"/></svg></button>
                        <button aria-label="點"><svg><use href="#s-rays"/></svg><svg class="caret"><use href="#caret"/></svg></button>
                        <button aria-label="填充線"><svg><use href="#s-hatch"/></svg><svg class="caret"><use href="#caret"/></svg></button>
                        <button aria-label="修訂雲形"><svg><use href="#s-cloud"/></svg><svg class="caret"><use href="#caret"/></svg></button>
                    </div>
                </div>
                <h2>繪圖<svg class="caret"><use href="#caret"/></svg></h2>
            </section>

            <section class="panel panel-modify">
                <div class="panel-body">
                    <div class="tools">
                        <button aria-label="移動"><svg><use href="#move"/></svg></button>
                        <button aria-label="旋轉"><svg><use href="#rotate"/></svg></button>
                        <button aria-label="拉伸"><svg><use href="#stretch"/></svg><svg class="caret"><use href="#caret"/></svg></button>
                        <button aria-label="複製"><svg><use href="#copy"/></svg></button>
                        <button aria-label="鏡射"><svg><use href="#mirror"/></svg></button>
                        <button aria-label="圓角"><svg><use href="#fillet"/></svg><svg class="caret"><use href="#caret"/></svg></button>
                        <button aria-label="對齊"><svg><use href="#trapezoid"/></svg></button>
                        <button aria-label="比例"><svg><use href="#scale"/></svg></button>
                        <button aria-label="陣列"><svg><use href="#array"/></svg><svg class="caret"><use href="#caret"/></svg></button>
                    </div>
                    <div class="rule"></div>
                    <div class="tools tools-single">
                        <button aria-label="刪除"><svg><use href="#erase"/></svg></button>
                        <button aria-label="分解"><svg><use href="#explode"/></svg></button>
                        <button aria-label="偏移"><svg><use href="#offset"/></svg></button>
                    </div>
                </div>
                <h2>修改<svg class="caret"><use href="#caret"/></svg></h2>
            </section>

            <section class="panel panel-note">
                <div class="panel-body">
                    <button class="big"><svg class="letter" viewBox="0 0 80 80"><text x="40" y="67" text-anchor="middle">A</text></svg>文字<svg class="caret"><use href="#caret"/></svg></button>
                    <div class="tools">
                        <button aria-label="標註"><svg><use href="#dim"/></svg><svg class="caret"><use href="#caret"/></svg></button>
                        <button aria-label="引線"><svg><use href="#leader"/></svg><svg class="caret"><use href="#caret"/></svg></button>
                        <button aria-label="表格"><svg><use href="#table"/></svg></button>
                    </div>
                </div>
                <h2>注解<svg class="caret"><use href="#caret"/></svg></h2>
            </section>

            <section class="panel panel-block">
                <div class="panel-body">
                    <button class="big"><svg><use href="#block"/></svg>插入圖塊</button>
                    <div class="tools">
                        <button aria-label="建立圖塊"><svg><use href="#b-new"/></svg></button>
                        <button aria-label="屬性"><svg><use href="#b-attr"/></svg></button>
                        <button aria-label="編輯圖塊"><svg><use href="#b-edit"/></svg></button>
                    </div>
                </div>
                <h2>圖塊<svg class="caret"><use href="#caret"/></svg></h2>
            </section>

            <section class="panel panel-layer">
                <div class="panel-body">
                    <button class="big"><svg><use href="#layermgr"/></svg>圖層管理員</button>
                    <div class="layer-tools">
                        <div class="combo">
                            <svg><use href="#bulb"/></svg><svg><use href="#sun"/></svg><svg><use href="#vp"/></svg><svg><use href="#padlock"/></svg>
                            <span class="swatch"></span>
                            <select aria-label="圖層"><option>0</option></select>
                            <span class="combo-arrow"><svg class="caret"><use href="#caret"/></svg></span>
                        </div>
                        <div class="tools">
                            <button aria-label="關閉圖層"><svg><use href="#l-off"/></svg></button>
                            <button aria-label="隔離"><svg><use href="#l-walk"/></svg></button>
                            <button aria-label="凍結"><svg><use href="#l-freeze"/></svg></button>
                            <button aria-label="鎖定"><svg><use href="#l-lock"/></svg></button>
                            <button aria-label="設為目前"><svg><use href="#l-cur"/></svg></button>
                            <button aria-label="前次圖層"><svg><use href="#l-prev"/></svg></button>
                            <button aria-label="合併"><svg><use href="#l-merge"/></svg></button>
                            <button aria-label="查詢"><svg><use href="#l-ask"/></svg></button>
                            <button aria-label="圖層狀態"><svg><use href="#l-state"/></svg></button>
                            <button aria-label="開啟圖層"><svg><use href="#l-on"/></svg></button>
                            <button aria-label="取消隔離"><svg><use href="#l-unwalk"/></svg></button>
                            <button aria-label="解凍"><svg><use href="#l-thaw"/></svg></button>
                            <button aria-label="解鎖"><svg><use href="#l-unlock"/></svg></button>
                            <button aria-label="相符"><svg><use href="#l-match"/></svg></button>
                            <button aria-label="目前圖層"><svg><use href="#l-check"/></svg></button>
                            <button aria-label="複製到圖層"><svg><use href="#l-curved"/></svg></button>
                            <button aria-label="變更圖層"><svg><use href="#l-swap"/></svg></button>
                            <button aria-label="匯出"><svg><use href="#l-export"/></svg></button>
                        </div>
                    </div>
                </div>
                <h2>圖層<svg class="caret"><use href="#caret"/></svg></h2>
            </section>

            <section class="panel panel-props">
                <div class="panel-body">
                    <button class="big"><svg><use href="#brush"/></svg>複製性質</button>
                    <div class="tools">
                        <button aria-label="顏色"><svg><use href="#wheel"/></svg></button>
                        <button aria-label="線型"><svg><use href="#ltype"/></svg></button>
                        <button aria-label="線寬"><svg><use href="#lweight"/></svg></button>
                    </div>
                    <div class="combos">
                        <div class="combo"><span class="swatch swatch-large"></span><select aria-label="顏色"><option>BYLAYER</option></select><span class="combo-arrow"><svg class="caret"><use href="#caret"/></svg></span></div>
                        <div class="combo"><span class="sample"></span><select aria-label="線型"><option>BYLAYER</option></select><span class="combo-arrow"><svg class="caret"><use href="#caret"/></svg></span></div>
                        <div class="combo"><span class="sample"></span><select aria-label="線寬"><option>BYLAYER</option></select><span class="combo-arrow"><svg class="caret"><use href="#caret"/></svg></span></div>
                    </div>
                </div>
                <h2>性質<svg class="caret"><use href="#caret"/></svg><svg class="launch"><use href="#launch"/></svg></h2>
            </section>

            <section class="panel panel-group">
                <div class="panel-body">
                    <button class="big"><svg><use href="#group"/></svg>群組</button>
                    <div class="tools">
                        <button aria-label="取消群組"><svg><use href="#ungroup"/></svg></button>
                        <button aria-label="編輯群組"><svg><use href="#groupedit"/></svg></button>
                        <button class="on" aria-label="群組選取"><svg><use href="#groupsel"/></svg></button>
                    </div>
                </div>
                <h2>群組(G)<svg class="caret"><use href="#caret"/></svg><svg class="launch"><use href="#launch"/></svg></h2>
            </section>

            <button class="big folded folded-measure"><svg><use href="#measure"/></svg>存取<svg class="caret"><use href="#caret"/></svg></button>
            <button class="big folded folded-clip"><svg><use href="#clip"/></svg>剪貼簿<svg class="caret"><use href="#caret"/></svg></button>
        </div>

        <nav class="doc-tabs">
            <button class="home">首頁</button>
            <button>圖面1</button>
            <button>圖面2</button>
            <button class="active">圖面3<svg><use href="#cross"/></svg></button>
            <button class="add" aria-label="新增圖面"><svg><use href="#plus"/></svg></button>
            <button class="list" aria-label="圖面清單"><svg><use href="#down"/></svg></button>
        </nav>

        <main class="work">
            <aside class="props">
                <h2 class="dock-title"><span class="grip"></span>PROPERTIES</h2>
                <div class="props-top">
                    <div class="pick">
                        <select aria-label="選取"><option>沒有選取</option></select>
                        <span class="pick-arrow"><svg><use href="#down"/></svg></span>
                    </div>
                    <button aria-label="分類"><svg><use href="#p-tree"/></svg></button>
                    <button aria-label="加入選取"><svg><use href="#p-add"/></svg></button>
                    <button aria-label="選取物件"><svg><use href="#p-pick"/></svg></button>
                    <button aria-label="快速選取"><svg><use href="#p-quick"/></svg></button>
                </div>
                <div class="props-main">
                    <div class="scroll"><span></span></div>
                    <div class="sections">
                        <section>
                            <h3>一般<svg><use href="#up"/></svg></h3>
                            <table>
                                <tr><th>顏色</th><td><span class="swatch-cell"></span>ByLayer</td></tr>
                                <tr><th>圖層</th><td>0</td></tr>
                                <tr><th>線型</th><td><span class="sample-cell"></span>ByLayer</td></tr>
                                <tr><th>線型比例</th><td>1</td></tr>
                                <tr><th>線粗</th><td><span class="sample-cell"></span>ByLayer</td></tr>
                                <tr><th>透明度</th><td>ByLayer</td></tr>
                                <tr><th>厚度</th><td>0</td></tr>
                            </table>
                        </section>
                        <section>
                            <h3>3D 可視化<svg><use href="#up"/></svg></h3>
                            <table>
                                <tr><th>材料</th><td>ByLayer</td></tr>
                            </table>
                        </section>
                        <section>
                            <h3>出圖型式<svg><use href="#up"/></svg></h3>
                            <table>
                                <tr><th>列印型式</th><td class="off">ByColor</td></tr>
                                <tr><th>出圖型式表</th><td></td></tr>
                                <tr><th>出圖表格貼附於</th><td class="off">Model</td></tr>
                                <tr><th>出圖表格類型</th><td class="off cjk">顏色相關之出圖型式</td></tr>
                            </table>
                        </section>
                        <section>
                            <h3>檢視<svg><use href="#up"/></svg></h3>
                            <table>
                                <tr><th>中心 X</th><td>309.2654</td></tr>
                            </table>
                        </section>
                    </div>
                </div>
            </aside>

            <div class="drawing">
                <div class="canvas">
                    <svg class="model">
                        <defs>
                            <pattern id="grid" x="300" y="1039" width="126.7" height="126.7" patternUnits="userSpaceOnUse">
                                <path d="M25.3 0v127M50.7 0v127M76 0v127M101.4 0v127M0 25.3h127M0 50.7h127M0 76h127M0 101.4h127" stroke="#262b36" stroke-width="2"/>
                                <path d="M0 0v127M0 0h127" stroke="#343a4b" stroke-width="4"/>
                            </pattern>
                        </defs>
                        <rect width="100%" height="100%" fill="url(#grid)"/>
                        <path d="M300 0v918" stroke="#3d8a26" stroke-width="2"/>
                        <path d="M422 1039h3000" stroke="#b02018" stroke-width="2"/>
                        <path d="M300 918v121h123M290 1029h20v20h-20z" fill="none" stroke="#fff" stroke-width="2"/>
                        <text x="306" y="937">Y</text>
                        <text x="402" y="1032">X</text>
                        <path d="M1338 768h117M1475 768h117M1464 642v116M1464 778v117M1455 758h20v20h-20z" fill="none" stroke="#fff" stroke-width="2"/>
                        <path d="M1459 768h12M1464 762v12" stroke="#fff" stroke-width="1"/>
                    </svg>
                    <div class="view-label">[上]&nbsp; [2D 線架構]</div>
                    <button class="view-cube">上</button>
                    <button class="wcs">WCS</button>
                </div>
                <div class="layouts">
                    <button class="nav" aria-label="第一個"><svg viewBox="0 0 24 24"><path d="M4 2v20" stroke="#000" stroke-width="2"/><path d="M19 2v20L8 12z"/></svg></button>
                    <button class="nav" aria-label="上一個"><svg viewBox="0 0 24 24"><path d="M17 2v20L6 12z"/></svg></button>
                    <button class="nav" aria-label="下一個"><svg viewBox="0 0 24 24"><path d="M7 2v20l11-10z"/></svg></button>
                    <button class="nav" aria-label="最後一個"><svg viewBox="0 0 24 24"><path d="M20 2v20" stroke="#000" stroke-width="2"/><path d="M5 2v20l11-10z"/></svg></button>
                    <button class="nav" aria-label="新增配置"><svg><use href="#plus"/></svg></button>
                    <button class="layout current"><svg viewBox="0 0 146 42"><path d="M1 0l19 42h107L145 0z" fill="#fff"/><path d="M1 0l19 42M145 0l-18 42" stroke="#000" stroke-width="2"/></svg><span>Model</span></button>
                    <button class="layout"><svg viewBox="0 0 122 42"><path d="M10 1L1 21l9 21h99l10-21-10-20z" fill="#d6d6d6"/><path d="M1 21l9 21M119 21l-10 21M109 2l19 40" fill="none" stroke="#000" stroke-width="2"/></svg><span>配置1</span></button>
                    <button class="layout"><svg viewBox="0 0 122 42"><path d="M-7 2l18 40h97l18-40z" fill="#d6d6d6"/><path d="M-9 2l19 40M126 2l-18 40" fill="none" stroke="#000" stroke-width="2"/></svg><span>配置2</span></button>
                    <button class="layout-list" aria-label="配置清單"><svg><use href="#down"/></svg></button>
                </div>
            </div>

            <aside class="palette">
                <h2 class="dock-title"><span class="grip"></span>工具選項板 - 所有選項板</h2>
                <div class="palette-body">
                    <div class="side">
                        <div class="side-tabs">
                            <button class="active">繪畫</button>
                            <button>修改</button>
                            <button>註釋</button>
                            <button class="tall">公用程式</button>
                            <button>視圖</button>
                            <button class="mid">3D工具</button>
                            <button class="last">填滿與填充線</button>
                        </div>
                        <button class="side-more">⋮</button>
                    </div>
                    <div class="items">
                        <button><svg><use href="#line"/></svg>線(L)</button>
                        <button><svg><use href="#pline"/></svg>聚合線(P)</button>
                        <button><svg><use href="#xline"/></svg>建構線</button>
                        <button><svg><use href="#rect"/></svg>矩形(G)</button>
                        <button><svg><use href="#polygon"/></svg>多邊形(Y)</button>
                        <button><svg><use href="#arc"/></svg>弧</button>
                        <button><svg><use href="#circle"/></svg>圓</button>
                        <button><svg><use href="#spline"/></svg>雲形線(S)</button>
                        <button><svg><use href="#ellipse"/></svg>橢圓(E)</button>
                        <button><svg><use href="#points"/></svg>多個點(M)</button>
                        <button><svg><use href="#helix"/></svg>螺旋線</button>
                    </div>
                    <div class="scroll"><span></span></div>
                </div>
            </aside>
        </main>

        <section class="command">
            <div class="command-side">
                <button aria-label="關閉"><svg><use href="#cross"/></svg></button>
                <button aria-label="選單"><svg><use href="#down"/></svg></button>
            </div>
            <div class="command-box">
                <pre class="history">指令 :  _QNEW</pre>
                <div class="prompt">
                    <label for="cmd">指令 :</label>
                    <input id="cmd" type="text">
                </div>
            </div>
        </section>

        <footer class="status">
            <span class="ready">準備</span>
            <span class="gap-cell"></span>
            <span class="coords"><svg><use href="#plus"/></svg>459.5569,106.0384,0</span>
            <button class="ratio"><svg><use href="#t-scale"/></svg>1:1</button>
            <button class="tile on" aria-label="註解可見性"><svg><use href="#t-vis"/></svg></button>
            <button class="tile" aria-label="自動比例"><svg><use href="#t-auto"/></svg></button>
            <button class="tile" aria-label="鎖點"><svg><use href="#t-snap"/></svg></button>
            <button class="tile on" aria-label="格點"><svg><use href="#t-grid"/></svg></button>
            <button class="tile on" aria-label="動態輸入"><svg><use href="#t-dyn"/></svg></button>
            <button class="tile" aria-label="正交"><svg><use href="#t-ortho"/></svg></button>
            <button class="tile on" aria-label="極座標"><svg><use href="#t-polar"/></svg></button>
            <button class="tile on" aria-label="物件鎖點"><svg><use href="#t-osnap"/></svg></button>
            <button class="tile on" aria-label="物件追蹤"><svg><use href="#t-otrack"/></svg></button>
            <button class="tile" aria-label="線寬"><svg><use href="#t-lw"/></svg></button>
            <button class="word">MODEL</button>
            <button class="tile" aria-label="設定"><svg><use href="#t-gear"/></svg></button>
            <button class="tile" aria-label="授權"><svg><use href="#t-medal"/></svg></button>
            <button class="tile" aria-label="視窗"><svg><use href="#t-win"/></svg></button>
            <button class="tile on" aria-label="效能"><svg><use href="#t-clock"/></svg></button>
            <button class="word word-aec">AEC 圖形</button>
            <button class="tile" aria-label="動態UCS"><svg><use href="#t-ucs"/></svg></button>
            <button class="tile" aria-label="隔離物件"><svg><use href="#t-shapes"/></svg></button>
            <button class="tile on" aria-label="循環選取"><svg><use href="#t-cycle"/></svg></button>
            <button class="tile on" aria-label="快速性質"><svg><use href="#t-props"/></svg></button>
            <button class="word word-count">1215</button>
            <button class="ok" aria-label="狀態"><svg><use href="#t-ok"/></svg></button>
        </footer>
    </div>
</body>
</html>
```
FILE: styles.css
```css
* {
    box-sizing: border-box;
}
body {
    margin: 0;
    padding: 0 12px 3px 4px;
    height: 100vh;
    overflow: hidden;
    font-family: "Noto Sans", "Noto Sans CJK TC", sans-serif;
    font-size: 27px;
    line-height: 36px;
    color: #f2f2f2;
    background:
        linear-gradient(#d5dbe8, #d5dbe8) bottom / 100% 3px no-repeat,
        linear-gradient(#a9b0bb 10%, #2c57c4 13%, #2c57c4 20%, #a5b8cd 27%, #2c62c8 30%, #2c62c8 36%, #a0a5c0 48%, #6f92dd 58%, #2b3f9a 63%, #1e3a0e 66%, #64861f 78%, #2a3c10 88%, #22340c 96%, #0d6ec5 97%) right / 12px 100% no-repeat,
        #b4b4b4;
}
button,
select,
input {
    font: inherit;
    color: inherit;
    background: none;
    border: 0;
    padding: 0;
    margin: 0;
}
select {
    appearance: none;
    outline: 0;
}
a {
    color: inherit;
    text-decoration: none;
}
h1, h2, h3 {
    margin: 0;
    font-size: inherit;
    font-weight: normal;
}
svg {
    display: block;
    flex: none;
    width: 40px;
    height: 40px;
}
.sprite {
    position: absolute;
    width: 0;
    height: 0;
}
svg.caret,
svg.chevron {
    width: 14px;
    height: 10px;
}
.app {
    display: flex;
    flex-direction: column;
    height: 100%;
    background: #535353;
}

/* title, quick access and menu */
.head {
    display: flex;
    height: 120px;
    background: linear-gradient(#535353 62px, #464d54 62px);
}
.logo {
    width: 128px;
    padding-left: 18px;
}
.logo svg {
    width: 80px;
    height: 80px;
}
.head-rows {
    flex: 1;
    display: flex;
    flex-direction: column;
}
.titlebar {
    display: flex;
    align-items: center;
    height: 62px;
}
.quick {
    display: flex;
    align-items: center;
    gap: 19px;
    padding: 0 0 6px 7px;
}
.quick .tiny {
    margin: 0 -4px 0 -8px;
}
.quick .more {
    margin-left: 20px;
    padding-top: 4px;
    border-top: 3px solid #d2d2d2;
}
.workspace {
    display: flex;
    align-items: center;
    width: 184px;
    height: 52px;
    margin: 2px -8px 0 -11px;
    padding: 0 4px;
    background: #fff;
    color: #000;
}
.workspace select {
    flex: 1;
    padding-left: 3px;
    font-size: 28px;
}
.title {
    flex: 1;
    padding-left: 20px;
    text-align: center;
    font-size: 29px;
}
.window-buttons {
    display: flex;
}
.window-buttons button {
    width: 88px;
    height: 60px;
    display: flex;
    align-items: center;
    justify-content: center;
}
.window-buttons svg {
    width: 20px;
    height: 20px;
}
.menubar {
    display: flex;
    align-items: center;
    gap: 48px;
    height: 54px;
    padding-left: 18px;
}

/* ribbon */
.ribbon-tabs {
    display: flex;
    align-items: flex-end;
    gap: 7px;
    height: 58px;
    padding-left: 8px;
}
.ribbon-tabs button {
    height: 50px;
    padding: 0 27px;
}
.ribbon-tabs .active {
    padding: 0 22px;
    border: 2px solid #333;
    border-bottom: 0;
    background: linear-gradient(#6e6e6e, #5a5a5a);
}
.ribbon {
    display: flex;
    gap: 3px;
    height: 262px;
    padding: 4px 7px 0;
    font-size: 28px;
    border-top: 2px solid #2e2e2e;
    border-bottom: 4px solid #333;
    background: linear-gradient(#4a4a4a, #373737);
    box-shadow: 0 2px 0 #8a8a8a;
}
.panel {
    display: flex;
    flex-direction: column;
    border: 1px solid #666;
    outline: 1px solid #3c3c3c;
    background: #5e5e5e;
}
.panel-body {
    flex: 1;
    display: flex;
}
.panel h2 {
    position: relative;
    display: flex;
    align-items: center;
    justify-content: center;
    gap: 14px;
    height: 48px;
    background: linear-gradient(#555, #484848);
}
.launch {
    position: absolute;
    right: 14px;
    width: 16px;
    height: 16px;
}
.big {
    display: flex;
    flex-direction: column;
    align-items: center;
    width: 120px;
    padding-top: 8px;
    white-space: nowrap;
}
.big > svg {
    width: 80px;
    height: 80px;
    margin-bottom: 8px;
}
.big > svg.caret {
    width: 14px;
    height: 10px;
    margin: 10px 0 0;
}
.tools {
    display: grid;
    grid-auto-rows: 59px;
    align-content: start;
    padding-top: 2px;
}
.tools button {
    display: flex;
    align-items: center;
    gap: 13px;
}
.panel-draw {
    width: 689px;
}
.panel-draw .panel-body {
    padding-left: 9px;
}
.panel-draw .tools {
    grid-template-columns: 92px 80px;
    grid-auto-rows: 64px;
    padding-left: 20px;
}
.panel-modify {
    width: 348px;
}
.panel-modify .tools {
    grid-template-columns: 71px 71px 84px;
    padding-left: 20px;
}
.panel-modify .tools button {
    gap: 28px;
}
.rule {
    width: 2px;
    height: 110px;
    margin: 49px 0 0 9px;
    background: #9a9a9a;
}
.panel-modify .tools-single {
    grid-template-columns: 40px;
    padding-left: 28px;
}
.panel-note {
    width: 237px;
}
.panel-note .big {
    width: 138px;
}
.panel-note .tools button {
    gap: 26px;
}
.letter {
    overflow: visible;
    font-family: "Open Sans", sans-serif;
    font-size: 72px;
    line-height: 80px;
    fill: #f2f2f2;
}
.panel-block {
    width: 232px;
}
.panel-block .big {
    width: 158px;
}
.panel-layer {
    width: 782px;
}
.panel-layer .big {
    width: 180px;
}
.layer-tools {
    width: 590px;
    padding-top: 3px;
}
.layer-tools .tools {
    grid-template-columns: repeat(9, 62px);
    grid-auto-rows: 64px;
    padding: 0 0 0 8px;
}
.combo {
    display: flex;
    align-items: center;
    height: 64px;
    padding-left: 6px;
    border: 3px solid #3c3c3c;
    font-size: 28px;
}
.layer-tools .combo {
    gap: 5px;
    padding-left: 4px;
}
.combo select {
    flex: 1;
    align-self: stretch;
    padding-left: 12px;
}
.combo-arrow {
    display: flex;
    align-items: center;
    justify-content: center;
    align-self: stretch;
    width: 28px;
    border-left: 2px solid #3c3c3c;
    background: linear-gradient(#717171, #505050);
}
.combo-arrow svg.caret {
    width: 12px;
    height: 8px;
}
.swatch {
    width: 32px;
    height: 32px;
    background: #fff;
}
.swatch-large {
    width: 43px;
    height: 43px;
    margin-left: 3px;
    border: 2px solid #000;
}
.sample {
    width: 206px;
    height: 3px;
    margin-left: 4px;
    background: #f2f2f2;
}
.panel-props {
    width: 670px;
}
.panel-props .big {
    width: 152px;
}
.panel-props .tools {
    grid-auto-rows: 64px;
    padding: 3px 8px 0 0;
}
.combos {
    width: 460px;
    padding-top: 3px;
}
.combos select {
    padding-left: 10px;
}
.panel-group {
    width: 232px;
}
.panel-group .big {
    width: 138px;
    padding-left: 14px;
}
.panel-group .tools {
    width: 72px;
    grid-auto-rows: 64px;
    padding-top: 3px;
}
.panel-group .tools button {
    justify-content: center;
}
.panel-group .on {
    border: 2px solid #2a3c66;
    background: linear-gradient(#8ba9dc, #516795);
}
.folded {
    border: 2px solid #3c3c3c;
    background: linear-gradient(#747474, #484848);
}
.folded-measure {
    width: 82px;
}
.folded-clip {
    width: 98px;
}

/* document tabs */
.doc-tabs {
    display: flex;
    align-items: flex-start;
    height: 64px;
    padding: 4px 12px 0 4px;
    font-size: 28px;
    color: #b8b8b8;
}
.doc-tabs button {
    width: 168px;
    height: 52px;
    padding-left: 11px;
    text-align: left;
    border-left: 2px solid #aaa;
    border-right: 2px solid #aaa;
    margin-right: 1px;
}
.doc-tabs .home {
    width: 83px;
}
.doc-tabs .active {
    display: flex;
    align-items: center;
    justify-content: space-between;
    width: 220px;
    height: 54px;
    padding: 0 20px 0 8px;
    color: #fff;
    border: 3px solid #d8d8d8;
    border-bottom: 0;
    background: linear-gradient(#757575, #5a5a5a);
}
.doc-tabs .active svg {
    width: 20px;
    height: 20px;
    color: #ccc;
}
.doc-tabs .add,
.doc-tabs .list {
    display: flex;
    align-items: center;
    width: 50px;
    padding-left: 24px;
    border: 0;
    color: #fff;
}
.doc-tabs .add svg {
    width: 24px;
    height: 24px;
}
.doc-tabs .list {
    margin-left: auto;
    margin-right: 0;
    padding-left: 28px;
}
.doc-tabs .list svg {
    width: 22px;
    height: 14px;
}

/* docked palettes */
.work {
    flex: 1;
    display: grid;
    grid-template-columns: 758px 1fr 631px;
    min-height: 0;
}
.dock-title {
    display: flex;
    align-items: center;
    gap: 10px;
    height: 62px;
    padding-left: 8px;
    font-size: 33px;
    background: #505050;
}
.grip {
    width: 12px;
    height: 48px;
    background: radial-gradient(circle, #ccc 1px, transparent 2px) 0 0 / 4px 4px;
}
.props,
.palette {
    display: flex;
    flex-direction: column;
    min-height: 0;
    background: #5e5e5e;
}
.props {
    margin-right: 4px;
}
.props-top {
    display: flex;
    align-items: center;
    gap: 14px;
    height: 98px;
    padding: 0 0 10px 41px;
}
.pick {
    display: flex;
    width: 424px;
    height: 56px;
    margin: 10px 28px 0 0;
    padding: 2px;
    border: 2px solid #fff;
    font-size: 28px;
}
.pick select {
    flex: 1;
    padding-left: 3px;
}
.pick-arrow {
    display: flex;
    align-items: center;
    justify-content: center;
    width: 43px;
    color: #000;
    background: #f0f0f0;
}
.pick-arrow svg {
    width: 20px;
    height: 12px;
}
.props-main {
    flex: 1;
    display: flex;
    min-height: 0;
}
.props-main .scroll {
    margin: 0 10px 16px 7px;
}
.scroll {
    width: 24px;
    background: linear-gradient(#565656, #565656) center / 8px 100% no-repeat;
}
.scroll span {
    display: block;
    height: 527px;
    border: 2px solid #999;
    background: #505050;
}
.sections {
    width: 692px;
    margin-bottom: 4px;
    overflow: hidden;
}
.sections section {
    margin-bottom: 7px;
}
.sections h3 {
    display: flex;
    align-items: center;
    justify-content: space-between;
    height: 58px;
    padding: 0 24px 0 15px;
    font-size: 28px;
    font-weight: bold;
    background: #505050;
}
.sections h3 svg {
    width: 18px;
    height: 12px;
    margin-bottom: 8px;
}
.sections table {
    width: 653px;
    margin-left: 39px;
    border-collapse: collapse;
    table-layout: fixed;
}
.sections th,
.sections td {
    height: 56px;
    padding: 0 0 4px 10px;
    border: 2px solid #505050;
    border-top: 0;
    text-align: left;
    font-weight: normal;
    white-space: nowrap;
}
.sections th,
.sections .cjk {
    font-size: 28px;
}
.sections td {
    font-size: 26px;
}
.sections .off {
    color: #9a9a9a;
}
.swatch-cell {
    display: inline-block;
    width: 38px;
    height: 38px;
    margin-right: 5px;
    vertical-align: middle;
    border: 2px solid #000;
    background: #fff;
}
.sample-cell {
    display: inline-block;
    width: 64px;
    height: 3px;
    margin-right: 11px;
    vertical-align: middle;
    background: #f2f2f2;
}

/* model space */
.drawing {
    display: flex;
    flex-direction: column;
    min-width: 0;
}
.canvas {
    position: relative;
    flex: 1;
    overflow: hidden;
    background: #22272f;
}
.model {
    position: absolute;
    width: 100%;
    height: 100%;
}
.model text {
    font-family: "Liberation Sans", sans-serif;
    font-size: 30px;
    fill: #e6e6e6;
}
.view-label {
    position: absolute;
    top: 8px;
    left: 15px;
    font-size: 28px;
}
.view-cube {
    position: absolute;
    top: 118px;
    right: 119px;
    width: 80px;
    height: 80px;
    padding-bottom: 14px;
    font-size: 50px;
    line-height: 50px;
    color: #20252c;
    border: 2px solid #5f6468;
    background: linear-gradient(#686c70, #686c70) center / 44px 44px no-repeat #7b7f82;
}
.wcs {
    position: absolute;
    top: 250px;
    right: 130px;
    width: 60px;
    height: 36px;
    font-size: 24px;
    color: #20252c;
    border-radius: 8px;
    background: #7b7f82;
}
.layouts {
    display: flex;
    height: 45px;
    margin-bottom: 2px;
    color: #000;
    border-top: 2px solid #fff;
    border-bottom: 2px solid #ccc;
    background: #efefef;
}
.nav {
    display: flex;
    align-items: center;
    justify-content: center;
    width: 44px;
    border-right: 2px solid #aaa;
    border-bottom: 2px solid #aaa;
}
.nav svg {
    width: 24px;
    height: 24px;
}
.layout {
    position: relative;
    width: 118px;
    font-size: 28px;
}
.layout svg {
    position: absolute;
    top: 0;
    left: 0;
    width: 122px;
    height: 100%;
    overflow: visible;
}
.layout span {
    position: relative;
}
.layout.current {
    width: 144px;
    margin-left: 9px;
    margin-right: -9px;
    font-family: "Liberation Sans", sans-serif;
    font-weight: bold;
}
.layout.current svg {
    width: 146px;
}
.layout-list {
    display: flex;
    align-items: center;
    justify-content: center;
    width: 44px;
    margin-left: auto;
    border-left: 2px solid #fff;
}
.layout-list svg {
    width: 22px;
    height: 13px;
}

/* tool palette */
.palette {
    margin-left: 6px;
}
.palette .dock-title {
    font-size: 36px;
}
.palette-body {
    flex: 1;
    display: flex;
    min-height: 0;
}
.side {
    display: flex;
    flex-direction: column;
    align-items: flex-end;
    width: 50px;
    margin-bottom: 6px;
}
.side-tabs {
    flex: 1;
    display: flex;
    flex-direction: column;
    align-items: flex-end;
    min-height: 0;
    overflow: hidden;
}
.side-tabs button {
    flex: none;
    width: 45px;
    height: 120px;
    font-size: 28px;
    text-align: center;
    color: #9c9c9c;
    writing-mode: vertical-rl;
    text-orientation: sideways;
    transform: rotate(180deg);
    border-right: 3px solid #fff;
    border-bottom: 4px solid #fff;
    border-top: 2px solid #999;
    background: #505050;
}
.side-tabs .active {
    width: 50px;
    height: 124px;
    color: #fff;
    background: #5e5e5e;
}
.side-tabs .tall {
    height: 167px;
}
.side-tabs .mid {
    height: 148px;
}
.side-tabs .last {
    height: 200px;
}
.side-more {
    width: 50px;
    height: 96px;
    color: #000;
    font-size: 24px;
    border: 3px solid #ddd;
    border-radius: 8px;
    background: #fff;
}
.items {
    flex: 1;
    padding-top: 4px;
    overflow: hidden;
}
.items button {
    display: flex;
    align-items: center;
    gap: 5px;
    width: 100%;
    height: 96px;
    padding-left: 10px;
}
.items svg {
    width: 80px;
    height: 80px;
}
.palette .scroll {
    margin: 0 7px 20px 0;
}
.palette .scroll span {
    height: 536px;
}

/* command line */
.command {
    display: flex;
    height: 147px;
    padding: 10px 3px 2px 0;
}
.command-side {
    display: flex;
    flex-direction: column;
    gap: 28px;
    width: 60px;
    padding: 12px 0 0 13px;
}
.command-side svg {
    width: 20px;
    height: 20px;
}
.command-side button + button svg {
    height: 14px;
}
.command-box {
    flex: 1;
    display: flex;
    flex-direction: column;
    font-family: "Liberation Mono", "Noto Sans CJK TC", monospace;
    font-size: 31px;
    line-height: 42px;
    color: #111;
    border: 3px solid #8a8a8a;
    border-bottom-color: #fff;
    border-right-color: #fff;
    background: #e5e5e5;
}
.history {
    flex: 1;
    margin: 0;
    padding: 3px 0 0 7px;
    font: inherit;
    background: linear-gradient(#fff, #fff) right 40px top / 2px 100% no-repeat, linear-gradient(#efefef, #efefef) right / 40px 100% no-repeat;
}
.prompt {
    display: flex;
    align-items: center;
    height: 64px;
    padding: 14px 0 0 7px;
    border-top: 3px solid #a8a8a8;
}
.prompt input {
    flex: 1;
    padding-left: 18px;
    outline: 0;
}

/* status bar */
.status {
    display: flex;
    height: 64px;
    padding-top: 5px;
    border-bottom: 2px solid #8f8f8f;
    font-size: 27px;
    line-height: 50px;
}
.status > * {
    border-right: 2px solid #a5a5a5;
}
.ready {
    flex: 1;
    padding-left: 7px;
    font-size: 28px;
}
.gap-cell {
    width: 20px;
}
.coords {
    display: flex;
    width: 370px;
    padding-left: 11px;
    gap: 28px;
}
.coords svg {
    width: 36px;
    height: 36px;
    margin-top: 18px;
    color: #e8301f;
}
.ratio {
    display: flex;
    align-items: center;
    gap: 6px;
    width: 118px;
    padding: 0 0 4px 8px;
}
.tile {
    width: 72px;
    padding: 3px 5px 0 9px;
}
.tile svg,
.ratio svg {
    width: 56px;
    height: 56px;
}
.tile.on svg {
    background: #6b90bf;
}
.word {
    width: 108px;
    padding: 0 0 6px 7px;
    text-align: left;
    white-space: nowrap;
}
.word-aec,
.word-count {
    color: #8c8c8c;
}
.word-aec {
    width: 126px;
}
.word-count {
    width: 76px;
}
.status .ok {
    width: 86px;
    padding-left: 16px;
    border-right: 0;
}
.ok svg {
    width: 46px;
    height: 46px;
}
```
